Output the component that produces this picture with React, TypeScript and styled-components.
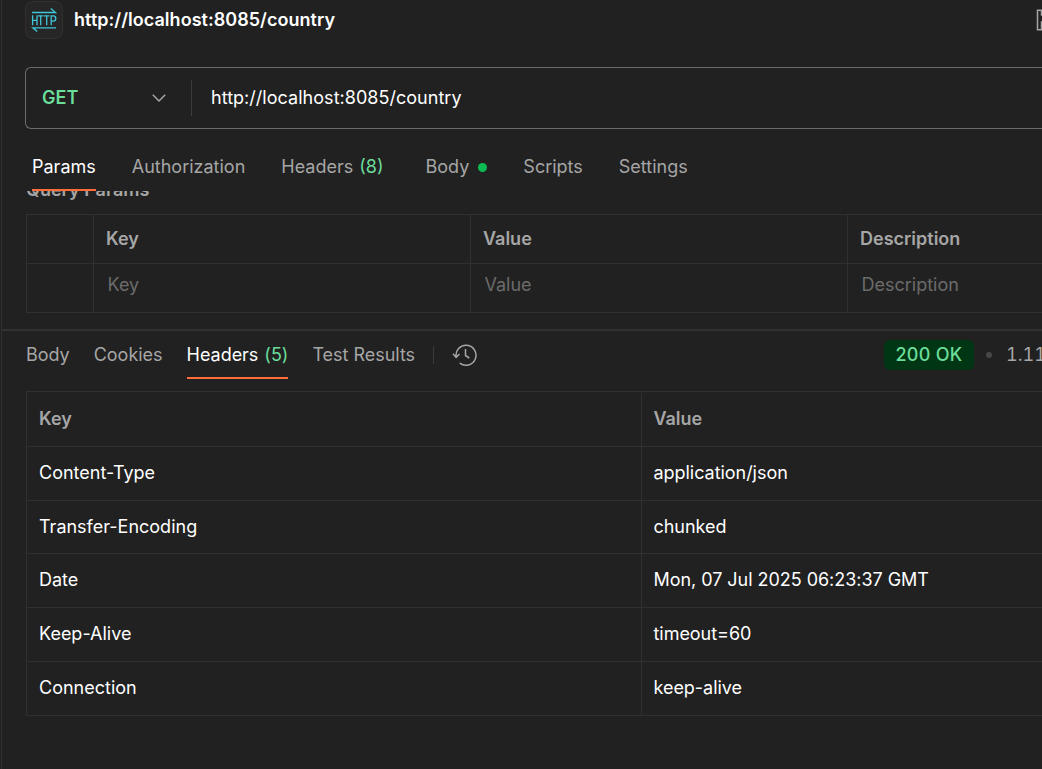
import React from "react";
import styled, { createGlobalStyle } from "styled-components";

const Global = createGlobalStyle`
  * { box-sizing: border-box; }
  html, body { margin: 0; background: #212121; overflow: hidden; }
  body { font-family: Inter, "Liberation Sans", sans-serif; font-size: 18px; line-height: 24px; color: #fff; }
`;

const Window = styled.div`
  width: 1042px;
  height: 769px;
  padding-left: 1px;
  background: #212121;
  overflow: hidden;
`;

const Workspace = styled.main`
  height: 769px;
  border-left: 1px solid #303030;
  display: flex;
  flex-direction: column;
  white-space: nowrap;
  overflow: hidden;
`;

const TitleBar = styled.header`
  height: 67px;
  flex: none;
  padding: 1px 0 0 23px;
  display: flex;
  align-items: flex-start;
`;

const ProtocolBadge = styled.span`
  width: 38px;
  height: 38px;
  border: 1px solid #303030;
  border-radius: 7px;
  background: #262626;
  display: flex;
  align-items: center;
  justify-content: center;
  svg { display: block; }
`;

const Title = styled.h1`
  margin: 7px 0 0 11px;
  flex: 1;
  font-size: 18px;
  line-height: 24px;
  font-weight: 600;
  letter-spacing: 0.035px;
`;

const SaveIcon = styled.svg`
  flex: none;
  margin: 8px -16px 0 0;
`;

const UrlBar = styled.div`
  flex: none;
  height: 62px;
  margin-left: 23px;
  border: 1px solid #6b6b6b;
  border-right: 0;
  border-radius: 6px 0 0 6px;
  display: flex;
  align-items: center;
`;

const MethodSelect = styled.div`
  width: 166px;
  height: 36px;
  padding: 0 24px 0 16px;
  border-right: 1px solid #3d3d3d;
  display: flex;
  align-items: center;
  justify-content: space-between;
  color: #6bdd9a;
  font-weight: 600;
`;

const Url = styled.span`
  padding-left: 19px;
  letter-spacing: 0.03px;
`;

const RequestTabs = styled.nav`
  flex: none;
  height: 62px;
  padding: 13px 0 0 30px;
  display: flex;
  gap: 36px;
`;

const Tab = styled.span<{ $active?: boolean; $indent?: number; $height: number }>`
  flex: none;
  height: ${(p) => p.$height}px;
  margin-left: ${(p) => p.$indent ?? 0}px;
  padding-top: ${(p) => p.$height - 36}px;
  display: flex;
  gap: 6px;
  color: ${(p) => (p.$active ? "#fff" : "#a6a6a6")};
  border-bottom: 2px solid ${(p) => (p.$active ? "#ff6c37" : "transparent")};
`;

const Count = styled.span`
  color: #6bdd9a;
`;

const BodyDot = styled.i`
  width: 9px;
  height: 9px;
  margin: 8px 0 0 3px;
  border-radius: 50%;
  background: #0cbb52;
`;

const ParamsPane = styled.section`
  flex: none;
  height: 140px;
  padding-left: 24px;
  border-bottom: 2px solid #303030;
  overflow: hidden;
`;

const PaneHeading = styled.h2`
  margin: -13px 0 12px;
  font-size: 18px;
  line-height: 24px;
  font-weight: 600;
  color: #a6a6a6;
`;

const ParamsTable = styled.div`
  width: 1200px;
  display: grid;
  grid-template-columns: 67px 377px 377px 378px;
  border-left: 1px solid #303030;
  border-top: 1px solid #303030;
`;

const ParamCell = styled.div<{ $head?: boolean }>`
  height: 49px;
  padding: ${(p) => (p.$head ? "12px 0 0 12px" : "9px 0 0 13.5px")};
  border-right: 1px solid #303030;
  border-bottom: 1px solid #303030;
  color: ${(p) => (p.$head ? "#a6a6a6" : "#6b6b6b")};
  font-weight: ${(p) => (p.$head ? 600 : 400)};
`;

const ResponseBar = styled.div`
  flex: none;
  height: 60px;
  padding-left: 24px;
  display: flex;
  align-items: flex-start;
`;

const ResponseTabs = styled.nav`
  display: flex;
  gap: 24px;
  letter-spacing: -0.02px;
`;

const Divider = styled.i`
  width: 1px;
  height: 18px;
  margin: 15px 18px 0 18px;
  background: #3a3a3a;
`;

const HistoryIcon = styled.svg`
  flex: none;
  margin-top: 12px;
`;

const Status = styled.div`
  margin-left: auto;
  padding-top: 9px;
  display: flex;
  align-items: center;
  color: #a6a6a6;
`;

const StatusBadge = styled.span`
  width: 90px;
  height: 30px;
  line-height: 30px;
  border-radius: 6px;
  background: #003613;
  color: #6bdd9a;
  font-weight: 500;
  text-align: center;
  letter-spacing: 0.3px;
`;

const Separator = styled.i`
  width: 6px;
  height: 6px;
  margin: 0 14px 0 12px;
  border-radius: 50%;
  background: #474747;
`;

const Elapsed = styled.span`
  width: 36px;
  font-variant-numeric: tabular-nums;
`;

const HeadersTable = styled.div`
  flex: none;
  width: 1200px;
  margin-left: 24px;
  border-left: 1px solid #303030;
  border-top: 1px solid #303030;
`;

const HeaderRow = styled.div<{ $height: number; $head?: boolean }>`
  height: ${(p) => p.$height}px;
  border-bottom: 1px solid #303030;
  display: grid;
  grid-template-columns: 615px 1fr;
  color: ${(p) => (p.$head ? "#a6a6a6" : "#fff")};
  font-weight: ${(p) => (p.$head ? 600 : 400)};
  padding-top: ${(p) => (p.$head ? 1 : 0)}px;
`;

const HeaderCell = styled.div`
  padding: 14px 0 0 12px;
  &:first-child { border-right: 1px solid #303030; }
  & + & { padding-left: 11.5px; letter-spacing: -0.04px; }
`;

const headers = [
  { key: "Content-Type", value: "application/json", height: 54 },
  { key: "Transfer-Encoding", value: "chunked", height: 53 },
  { key: "Date", value: "Mon, 07 Jul 2025 06:23:37 GMT", height: 54 },
  { key: "Keep-Alive", value: "timeout=60", height: 54 },
  { key: "Connection", value: "keep-alive", height: 54 },
];

function HttpGlyph() {
  return (
    <svg width="26" height="26" viewBox="0 0 26 26" fill="none" stroke="#3fc6d8" strokeWidth="1.3">
      <path d="M1 5.5H24.5L19.8 1.4M25 20.8H1.8L6.2 24.6" />
      <path d="M1.6 8.3V18.3M6 8.3V18.3M1.6 13.3H6M7 8.9H12.4M9.7 8.9V18.3M13 8.9H18.4M15.7 8.9V18.3M20.2 18.3V8.9H22.2a2.5 2.5 0 0 1 0 5.2H20.2" />
    </svg>
  );
}

export default function App() {
  return (
    <Window>
      <Global />
      <Workspace>
        <TitleBar>
          <ProtocolBadge><HttpGlyph /></ProtocolBadge>
          <Title>http://localhost:8085/country</Title>
          <SaveIcon width="22" height="22" viewBox="0 0 22 22" fill="none" stroke="#a6a6a6" strokeWidth="1.5">
            <path d="M1.5 1.2H16L20.5 6V20.8H1.5ZM5.5 1.5V6H14V1.5M5.5 20.5V13H16.5V20.5" />
          </SaveIcon>
        </TitleBar>
        <UrlBar>
          <MethodSelect>
            GET
            <svg width="16" height="10" viewBox="0 0 16 10" fill="none" stroke="#a6a6a6" strokeWidth="1.5">
              <path d="M1.8 1.8L8 8L14.2 1.8" />
            </svg>
          </MethodSelect>
          <Url>http://localhost:8085/country</Url>
        </UrlBar>
        <RequestTabs>
          <Tab $active $height={49}>Params</Tab>
          <Tab $height={49}>Authorization</Tab>
          <Tab $height={49}>Headers <Count>(8)</Count></Tab>
          <Tab $height={49} $indent={6}>Body <BodyDot /></Tab>
          <Tab $height={49}>Scripts</Tab>
          <Tab $height={49}>Settings</Tab>
        </RequestTabs>
        <ParamsPane>
          <PaneHeading>Query Params</PaneHeading>
          <ParamsTable>
            <ParamCell $head />
            <ParamCell $head>Key</ParamCell>
            <ParamCell $head>Value</ParamCell>
            <ParamCell $head>Description</ParamCell>
            <ParamCell />
            <ParamCell>Key</ParamCell>
            <ParamCell>Value</ParamCell>
            <ParamCell>Description</ParamCell>
          </ParamsTable>
        </ParamsPane>
        <ResponseBar>
          <ResponseTabs>
            <Tab $height={48}>Body</Tab>
            <Tab $height={48}>Cookies</Tab>
            <Tab $active $height={48}>Headers <Count>(5)</Count></Tab>
            <Tab $height={48}>Test Results</Tab>
          </ResponseTabs>
          <Divider />
          <HistoryIcon width="26" height="24" viewBox="0 0 26 24" fill="none" stroke="#a6a6a6" strokeWidth="1.5">
            <path d="M4.2 14.2A10 10 0 1 1 7.8 20.1M1 10.8L4.1 14.4L7.5 11M13.5 6V12.5L17.3 15" />
          </HistoryIcon>
          <Status>
            <StatusBadge>200 OK</StatusBadge>
            <Separator />
            <Elapsed>1.11</Elapsed>
          </Status>
        </ResponseBar>
        <HeadersTable>
          <HeaderRow $head $height={55}>
            <HeaderCell>Key</HeaderCell>
            <HeaderCell>Value</HeaderCell>
          </HeaderRow>
          {headers.map((h) => (
            <HeaderRow key={h.key} $height={h.height}>
              <HeaderCell>{h.key}</HeaderCell>
              <HeaderCell>{h.value}</HeaderCell>
            </HeaderRow>
          ))}
        </HeadersTable>
      </Workspace>
    </Window>
  );
}
